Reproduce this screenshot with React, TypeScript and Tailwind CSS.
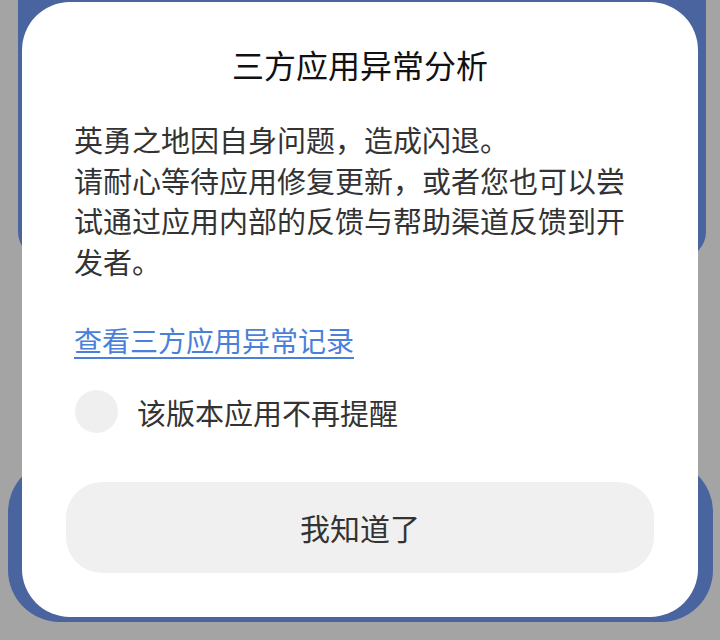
import React from 'react';

const font = { fontFamily: '"Noto Sans CJK SC", "Noto Sans", sans-serif' };

export default function App() {
  return (
    <div className="relative w-[720px] h-[640px] overflow-hidden bg-[#a4a4a4]" style={font}>
      {/* page behind the dialog */}
      <div className="flex flex-col">
        <div className="ml-[18px] w-[688px] h-[258px] rounded-b-[26px] bg-[#4a64a0]" />
        <div className="mt-[202px] ml-[8px] w-[705px] h-[162px] rounded-[52px] bg-[#4a64a0]" />
      </div>

      {/* dialog */}
      <div className="absolute left-[22px] top-[2px] w-[676px] h-[615px] rounded-[48px] bg-white flex flex-col">
        <h1 className="mt-[42px] text-center text-[32px] leading-[40px] font-normal text-[#111]">
          三方应用异常分析
        </h1>

        <p className="mt-[35px] px-[52px] text-[29px] leading-[40.7px] text-[#333]">
          英勇之地因自身问题，造成闪退。
          <br />
          请耐心等待应用修复更新，或者您也可以尝试通过应用内部的反馈与帮助渠道反馈到开发者。
        </p>

        <div className="mt-[38px] px-[52px]">
          <a className="text-[28px] leading-[40px] text-[#4a80d9] underline underline-offset-[5px] decoration-[1.5px]">
            查看三方应用异常记录
          </a>
        </div>

        <label className="mt-[30px] ml-[53px] flex items-center gap-[19px] h-[44px]">
          <span className="w-[43px] h-[43px] rounded-full bg-[#efefef]" />
          <span className="text-[29px] leading-[40px] text-[#333]">该版本应用不再提醒</span>
        </label>

        <button className="mt-[48px] mx-[44px] h-[91px] rounded-[36px] bg-[#f0f0f0] text-[30px] font-normal text-[#333]">
          我知道了
        </button>
      </div>
    </div>
  );
}
